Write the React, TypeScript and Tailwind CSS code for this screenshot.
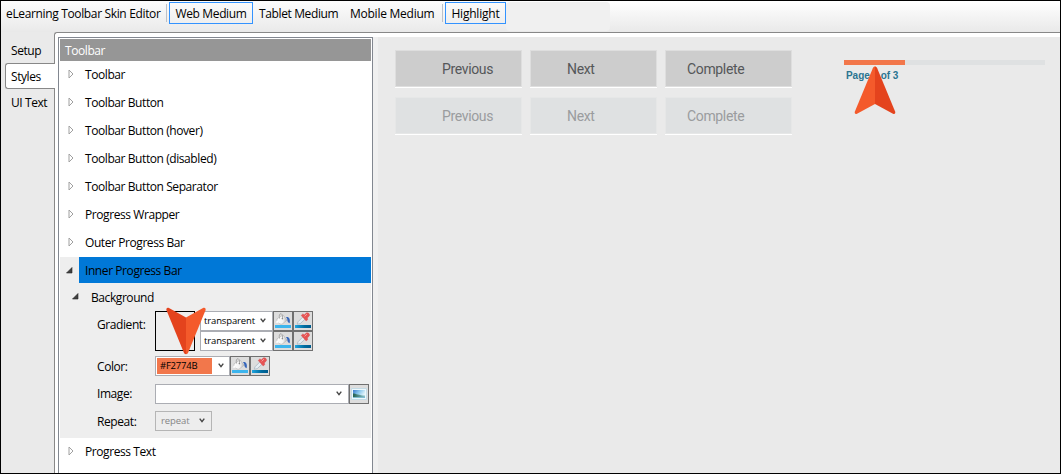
import React from "react";

const ui = "font-['Open_Sans','Noto_Sans',sans-serif]";

function Collapsed() {
  return (
    <svg width="6" height="10" viewBox="0 0 6 10" className="block">
      <path d="M1 1V9L5 5Z" fill="#fff" stroke="#a0a0a0" />
    </svg>
  );
}

function Expanded() {
  return (
    <svg width="7" height="7" viewBox="0 0 7 7" className="block">
      <path d="M6 .5V6H.5Z" fill="#404040" stroke="#262626" strokeWidth=".6" />
    </svg>
  );
}

function Chevron() {
  return (
    <svg width="6" height="5" viewBox="0 0 6 5" className="mb-[2px] block shrink-0">
      <path d="M.7 .6L3 3.6L5.3 .6" fill="none" stroke="#444" strokeWidth="1.4" />
    </svg>
  );
}

function BucketButton() {
  return (
    <div className="h-5 w-5 shrink-0 border border-[#707070] bg-[#dddddd]">
      <svg width="18" height="18" viewBox="0 0 18 18" className="block">
        <defs>
          <linearGradient id="bucket">
            <stop offset="0" stopColor="#fff" />
            <stop offset=".6" stopColor="#f2f2f2" />
            <stop offset="1" stopColor="#b5b5b5" />
          </linearGradient>
        </defs>
        <path d="M12 5C15 4.3 16.6 7 15.6 11.2C14.4 11 13.2 9.5 13.2 7Z" fill="#3565ba" />
        <path d="M3 6.8L9 3L13 8.2L8 12.2C5.5 12.6 3 10 3 6.8Z" fill="url(#bucket)" stroke="#b0b0b0" strokeWidth=".6" />
        <path d="M5.5 6.5C4.7 3 6 1.2 7.3 1.8C8.8 2.6 8.6 5 8.4 6.5" fill="none" stroke="#a2a2a2" strokeWidth=".9" />
        <circle cx="8.4" cy="6.6" r=".8" fill="#888" />
        <path d="M3.8 8L1.5 10.5L4.8 11Z" fill="#fff" />
        <path d="M1 13H17V16H1Z" fill="#3db5ed" />
      </svg>
    </div>
  );
}

function DropperButton() {
  return (
    <div className="h-5 w-5 shrink-0 border border-[#707070] bg-[#dddddd]">
      <svg width="18" height="18" viewBox="0 0 18 18" className="block">
        <defs>
          <linearGradient id="drop">
            <stop offset="0" stopColor="#20a5df" />
            <stop offset=".6" stopColor="#006b9e" />
            <stop offset="1" stopColor="#005b8d" />
          </linearGradient>
        </defs>
        <path d="M3.2 12.2L4 9.8L9 4.8L11.2 7L6.2 11.7Z" fill="#e6edf2" stroke="#a8b6c2" strokeWidth=".8" />
        <path d="M7.2 3.4L8.8 1.9L10.4 2.8L12.3 1C14.2 .2 16.3 2.1 15.3 4L13.3 5.9L13.8 7.5L12.2 9Z" fill="#e65353" stroke="#d5474b" strokeWidth=".4" />
        <path d="M10.6 4.4L13 2.1" stroke="#f5a1a1" />
        <path d="M1 13H17V16H1Z" fill="url(#drop)" />
      </svg>
    </div>
  );
}

function ImageButton() {
  return (
    <div className="h-5 w-5 shrink-0 border border-[#707070] bg-[#dddddd]">
      <svg width="18" height="18" viewBox="0 0 18 18" className="block">
        <defs>
          <linearGradient id="sky" x1="0" y1="0" x2="1" y2=".5">
            <stop offset="0" stopColor="#3978cc" />
            <stop offset=".5" stopColor="#8ac8ed" />
            <stop offset="1" stopColor="#e8f7fb" />
          </linearGradient>
          <linearGradient id="land">
            <stop offset="0" stopColor="#22604f" />
            <stop offset="1" stopColor="#8cc4cf" />
          </linearGradient>
        </defs>
        <path d="M1.5 3.5H16.5V14.5H1.5Z" fill="#edf8fc" stroke="#c3dbe6" />
        <path d="M3 5H15V13H3Z" fill="url(#sky)" />
        <path d="M3 8.5C6 8.5 9 10.5 15 10.5V12H3Z" fill="url(#land)" />
        <path d="M3 12H15V13H3Z" fill="#80bdd1" />
      </svg>
    </div>
  );
}

function TreeRow({ label }: { label: string }) {
  return (
    <div className="flex h-7 items-center pl-2">
      <div className="w-[17px] pb-0.5"><Collapsed /></div>
      <span>{label}</span>
    </div>
  );
}

function TransparentSelect() {
  return (
    <div className="flex h-5 w-[73px] items-center justify-between border border-[#abadb3] bg-white pr-[6px] pl-[3px] text-[9.5px] tracking-[-0.13px]">
      <span>transparent</span>
      <Chevron />
    </div>
  );
}

function PreviewButton({ label, pad, disabled = false }: { label: string; pad: string; disabled?: boolean }) {
  return (
    <div className="h-[38px] w-[127px] border-b border-white">
      <div className={`flex h-[37px] items-center border text-[14px] tracking-[-0.35px] ${pad} ${disabled ? "border-[#e6e7e7] bg-[#dfe1e2] text-[#9a9c9e]" : "border-[#dedede] bg-[#cdcdcd] text-[#555759]"}`}>
        {label}
      </div>
    </div>
  );
}

function PreviewRow({ disabled = false }: { disabled?: boolean }) {
  return (
    <div className="flex gap-2">
      <PreviewButton label="Previous" pad="pl-[46px]" disabled={disabled} />
      <PreviewButton label="Next" pad="pl-[36px]" disabled={disabled} />
      <PreviewButton label="Complete" pad="pl-[21px]" disabled={disabled} />
    </div>
  );
}

function Header() {
  return (
    <header className="flex h-[31px] shrink-0 bg-linear-to-b from-white to-[#e9e9e9]">
      <div className="flex h-[29px] w-[505px] shrink-0 items-start bg-linear-to-b from-[#fcfcfc] to-[#ebebeb] pt-px">
        <span className="mt-[3px] ml-[5px] w-[160px] whitespace-nowrap tracking-[-0.35px]">eLearning Toolbar Skin Editor</span>
        <span className="mt-0.5 h-[18px] w-px bg-[#bcc1c9]" />
        <div className="ml-0.5 flex h-[22px] w-[84px] items-center justify-center border border-[#3393ff] pt-px tracking-[-0.35px]">Web Medium</div>
        <span className="mt-[3px] ml-[6px] w-[91px] whitespace-nowrap tracking-[-0.37px]">Tablet Medium</span>
        <span className="mt-[3px] w-[92px] whitespace-nowrap tracking-[-0.25px]">Mobile Medium</span>
        <span className="mt-0.5 h-[18px] w-px bg-[#bcc1c9]" />
        <div className="ml-0.5 flex h-[22px] w-[61px] items-center justify-center border border-[#3393ff] pt-px tracking-[-0.2px]">Highlight</div>
      </div>
      <div className="mt-px h-[29px] w-[104px] rounded-sm bg-[#f0f0f0]" />
    </header>
  );
}

function Properties() {
  return (
    <div className="h-[181px] bg-[#eeeeee]">
      <div className="flex h-[26px]">
        <div className="flex w-[19px] items-center pl-[6px]"><Expanded /></div>
        <div className="flex flex-1 items-center bg-[#0078d7] pt-[2px] pl-[6px]">Inner Progress Bar</div>
      </div>
      <div className="flex h-7 items-center pl-3">
        <div className="w-[19px] pb-0.5"><Expanded /></div>
        <span className="pt-[2px]">Background</span>
      </div>
      <div className="flex h-10 pl-[37px]">
        <span className="w-[58px] pt-[5px]">Gradient:</span>
        <div className="relative mr-[5px] h-10 w-10 shrink-0 border border-black">
          <svg width="42" height="49" viewBox="0 0 42 49" className="absolute -top-[6px] left-[9px] z-10">
            <path d="M3.5 1.8L21 11.5V48.2C20 48.2 19.3 47.6 18.8 46.5L1.5 4.2C.9 2.5 2.1 1.2 3.5 1.8Z" fill="#e4431d" />
            <path d="M38.5 1.8L21 11.5V48.2C22 48.2 22.7 47.6 23.2 46.5L40.5 4.2C41.1 2.5 39.9 1.2 38.5 1.8Z" fill="#f45a2b" />
          </svg>
        </div>
        <div>
          <div className="flex"><TransparentSelect /><BucketButton /><DropperButton /></div>
          <div className="flex"><TransparentSelect /><BucketButton /><DropperButton /></div>
        </div>
      </div>
      <div className="mt-[5px] flex h-5 items-center pl-[37px]">
        <span className="w-[58px] pt-[2px]">Color:</span>
        <div className="flex h-5 w-[75px] items-center border border-[#abadb3] bg-white p-px text-[9.5px]">
          <div className="flex h-4 w-[55px] items-center bg-[#f2774b] pl-[3px] tracking-[-0.22px]">#F2774B</div>
          <div className="ml-[6px]"><Chevron /></div>
        </div>
        <BucketButton /><DropperButton />
      </div>
      <div className="mt-2 flex h-5 items-center pl-[37px]">
        <span className="w-[58px]">Image:</span>
        <div className="flex h-5 w-[194px] items-center justify-end border border-[#abadb3] bg-white pr-[6px]"><Chevron /></div>
        <ImageButton />
      </div>
      <div className="mt-[7px] flex h-5 items-center pl-[37px]">
        <span className="w-[58px] pt-[2px]">Repeat:</span>
        <div className="flex h-5 w-[57px] items-center justify-between border border-[#b5b5b5] bg-[#ededed] pr-[6px] pl-[5px] text-[9.5px] tracking-[-0.1px] text-[#858585]"><span>repeat</span><Chevron /></div>
      </div>
    </div>
  );
}

export default function App() {
  return (
    <main className={`flex h-[474px] w-[1061px] flex-col overflow-hidden border border-black bg-[#eaeaea] text-[12px] leading-[18px] tracking-[-0.42px] text-black ${ui}`}>
      <Header />
      <div className="flex min-h-0 flex-1">
        <nav className="z-10 flex w-[53px] shrink-0 flex-col pt-[10px] pl-1">
          <div className="h-[21px] pl-[6px]">Setup</div>
          <div className="-mr-px flex h-[26px] items-center rounded-l-[3px] border border-r-0 border-[#888888] bg-white pt-px pl-[5px]">Styles</div>
          <div className="pt-[5px] pl-[6px] whitespace-nowrap">UI Text</div>
        </nav>
        <div className="flex min-w-0 flex-1 rounded-tl-[3px] border-t border-l border-[#888888] bg-white pt-1 pl-[3px]">
          <aside className="w-[315px] shrink-0 border border-b-0 border-[#828790] bg-white pt-px pl-px">
            <div className="mr-px flex h-[22px] items-center bg-[#969696] pt-[2px] pl-[5px] text-white">Toolbar</div>
            <div className="mr-px">
              {["Toolbar", "Toolbar Button", "Toolbar Button (hover)", "Toolbar Button (disabled)", "Toolbar Button Separator", "Progress Wrapper", "Outer Progress Bar"].map((label) => <TreeRow key={label} label={label} />)}
              <Properties />
              <TreeRow label="Progress Text" />
            </div>
          </aside>
          <div className="w-[5px] shrink-0 bg-[#f0f0f0]" />
          <section className="flex min-w-0 flex-1 bg-[#eaeaea] pt-[13px] pl-[17px] font-['Roboto','Liberation_Sans',sans-serif]">
            <div className="flex flex-col gap-[9px]">
              <PreviewRow />
              <PreviewRow disabled />
            </div>
            <div className="ml-[52px] w-[201px] pt-[10px]">
              <div className="h-[5px] bg-[#dfe1e2]"><div className="h-full w-[61px] bg-[#f2774b]" /></div>
              <div className="relative h-5 pt-[5px] pl-0.5 font-['Liberation_Sans',sans-serif] text-[10px] leading-[11px] font-bold tracking-[-0.05px] text-[#2b7591]">
                Page 1 of 3
                <svg width="42" height="50" viewBox="0 0 42 50" className="absolute top-px left-[10px]">
                  <path d="M21 .5C20 .5 19.3 1.1 18.8 2.3L.9 45.5C.2 47.3 1.4 48.5 3 47.7L21 38Z" fill="#f45a2b" />
                  <path d="M21 .5C22 .5 22.7 1.1 23.2 2.3L41.1 45.5C41.8 47.3 40.6 48.5 39 47.7L21 38Z" fill="#e4431d" />
                </svg>
              </div>
            </div>
          </section>
        </div>
      </div>
    </main>
  );
}
